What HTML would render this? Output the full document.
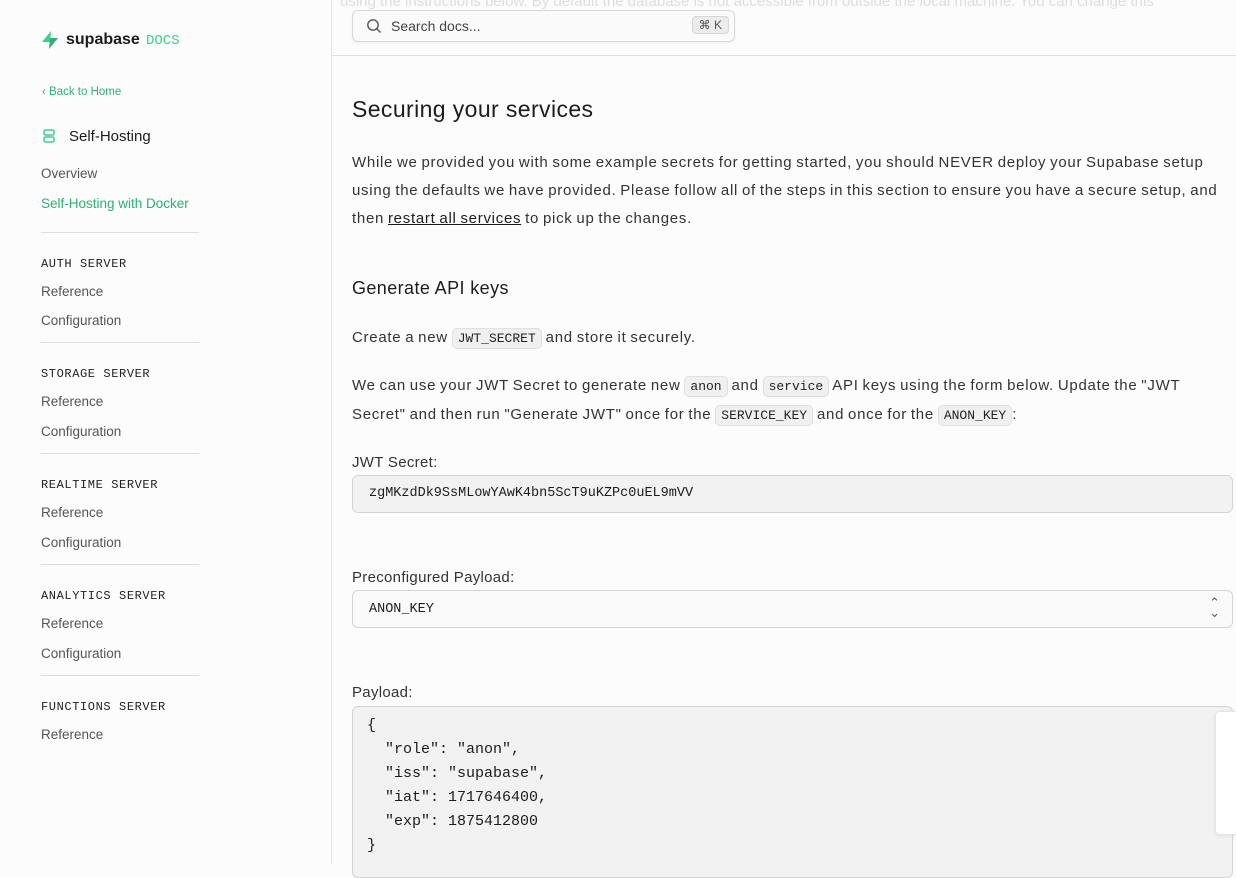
<!DOCTYPE html>
<html><head><style>
body{margin:0;width:1236px;height:864px;overflow:hidden;background:#fcfcfc;font-family:"Liberation Sans",sans-serif;color:#1c1c1c;position:relative}
.side{position:absolute;left:0;top:0;width:331px;height:864px;border-right:1px solid #e4e4e4;background:#fcfcfc}
.a{position:absolute}
.mono{font-family:"Liberation Mono",monospace}
.nav{font-size:13.5px;color:#555;position:absolute;left:41px}
.sec{font-family:"Liberation Mono",monospace;font-size:12px;letter-spacing:.6px;color:#222;position:absolute;left:41px}
.hr{position:absolute;left:41px;width:158px;border-top:1px solid #dedede}
p{margin:0;position:absolute;left:352px;font-size:15px;line-height:28px;color:#333;width:880px;letter-spacing:0.72px;word-spacing:-1px}
code{font-family:"Liberation Mono",monospace;font-size:13px;background:#f0f0f0;border:1px solid #e0e0e0;border-radius:5px;padding:2px 5px;color:#222;letter-spacing:0}
.box{position:absolute;left:352px;width:879px;border:1px solid #d4d4d4;border-radius:6px}
.lbl{position:absolute;left:352px;font-size:15px;color:#333;letter-spacing:.3px}
</style></head><body>
<div class="a" style="left:340px;top:-7px;font-size:15px;color:#ddd;white-space:nowrap">using the instructions below. By default the database is not accessible from outside the local machine. You can change this</div>
<div class="a" style="left:332px;top:55px;width:904px;border-top:1px solid #e0e0e0"></div>
<div class="a" style="left:352px;top:10px;width:381px;height:30px;border:1px solid #d8d8d8;border-radius:6px;background:#fafafa;box-shadow:0 1px 3px rgba(0,0,0,.05)">
<svg class="a" style="left:13px;top:7px" width="16" height="16" viewBox="0 0 16 16"><circle cx="7" cy="7" r="5.2" fill="none" stroke="#555" stroke-width="1.4"/><path d="M11 11l3.5 3.5" stroke="#555" stroke-width="1.4"/></svg>
<span class="a" style="left:38px;top:7px;font-size:14px;color:#444">Search docs...</span>
<span class="a" style="right:5px;top:5px;font-size:12px;color:#555;background:#ececec;border:1px solid #d6d6d6;border-radius:4px;padding:1px 6px">⌘ K</span></div>

<div class="side">
<svg class="a" style="left:40px;top:30px" width="20" height="20" viewBox="0 0 20 20"><path d="M11 1L2 12h8z" fill="#3ecf8e"/><path d="M9 19l9-11h-8z" fill="#2fb074"/></svg>
<span class="a" style="left:66px;top:31px;font-size:16px;font-weight:bold;color:#1c1c1c">supabase</span>
<span class="a mono" style="left:146px;top:33px;font-size:14px;color:#3ecf8e">DOCS</span>
<span class="a" style="left:42px;top:86px;font-size:11.5px;color:#2fb074">‹ Back to Home</span>
<svg class="a" style="left:42px;top:129px" width="14" height="14" viewBox="0 0 14 14"><rect x="2" y="1" width="10" height="5" rx="1.5" fill="none" stroke="#3ecf8e" stroke-width="1.5"/><rect x="2" y="8" width="10" height="5" rx="1.5" fill="none" stroke="#3ecf8e" stroke-width="1.5"/></svg>
<span class="a" style="left:69px;top:128px;font-size:15px;color:#1c1c1c">Self-Hosting</span>
<span class="nav" style="top:166px">Overview</span>
<span class="nav" style="top:196px;color:#2fb074">Self-Hosting with Docker</span>
<div class="hr" style="top:232px"></div>
<span class="sec" style="top:257px">AUTH SERVER</span><span class="nav" style="top:284px">Reference</span><span class="nav" style="top:313px">Configuration</span>
<div class="hr" style="top:342px"></div>
<span class="sec" style="top:367px">STORAGE SERVER</span><span class="nav" style="top:394px">Reference</span><span class="nav" style="top:424px">Configuration</span>
<div class="hr" style="top:453px"></div>
<span class="sec" style="top:478px">REALTIME SERVER</span><span class="nav" style="top:505px">Reference</span><span class="nav" style="top:535px">Configuration</span>
<div class="hr" style="top:564px"></div>
<span class="sec" style="top:589px">ANALYTICS SERVER</span><span class="nav" style="top:616px">Reference</span><span class="nav" style="top:646px">Configuration</span>
<div class="hr" style="top:675px"></div>
<span class="sec" style="top:700px">FUNCTIONS SERVER</span><span class="nav" style="top:727px">Reference</span>
</div>

<div class="a" style="left:352px;top:96px;font-size:23px;color:#1c1c1c;letter-spacing:.4px">Securing your services</div>
<p style="top:149px">While we provided you with some example secrets for getting started, you should NEVER deploy your Supabase setup using the defaults we have provided. Please follow all of the steps in this section to ensure you have a secure setup, and then <u style="color:#1c1c1c">restart all services</u> to pick up the changes.</p>
<div class="a" style="left:352px;top:278px;font-size:18px;color:#1c1c1c;letter-spacing:.4px">Generate API keys</div>
<p style="top:324px">Create a new <code>JWT_SECRET</code> and store it securely.</p>
<p style="top:372px">We can use your JWT Secret to generate new <code>anon</code> and <code>service</code> API keys using the form below. Update the "JWT Secret" and then run "Generate JWT" once for the <code>SERVICE_KEY</code> and once for the <code>ANON_KEY</code>:</p>
<span class="lbl" style="top:454px">JWT Secret:</span>
<div class="box" style="top:475px;height:36px;background:#f2f2f2"><span class="a mono" style="left:16px;top:10px;font-size:13.5px">zgMKzdDk9SsMLowYAwK4bn5ScT9uKZPc0uEL9mVV</span></div>
<span class="lbl" style="top:569px">Preconfigured Payload:</span>
<div class="box" style="top:590px;height:36px;background:#fafafa"><span class="a mono" style="left:16px;top:11px;font-size:13.5px">ANON_KEY</span><span class="a" style="right:12px;top:7px;font-size:13px;color:#555;line-height:10px">⌃<br>⌄</span></div>
<span class="lbl" style="top:684px">Payload:</span>
<div class="box" style="top:706px;height:170px;background:#f2f2f2"><pre class="mono" style="margin:0;position:absolute;left:14px;top:7px;font-size:15px;line-height:24px;color:#1c1c1c">{
  "role": "anon",
  "iss": "supabase",
  "iat": 1717646400,
  "exp": 1875412800
}</pre></div>
<div class="a" style="left:1215px;top:711px;width:30px;height:122px;background:#fff;border:1px solid #e4e4e4;border-radius:5px;box-shadow:0 1px 4px rgba(0,0,0,.08)"></div>
</body></html>
